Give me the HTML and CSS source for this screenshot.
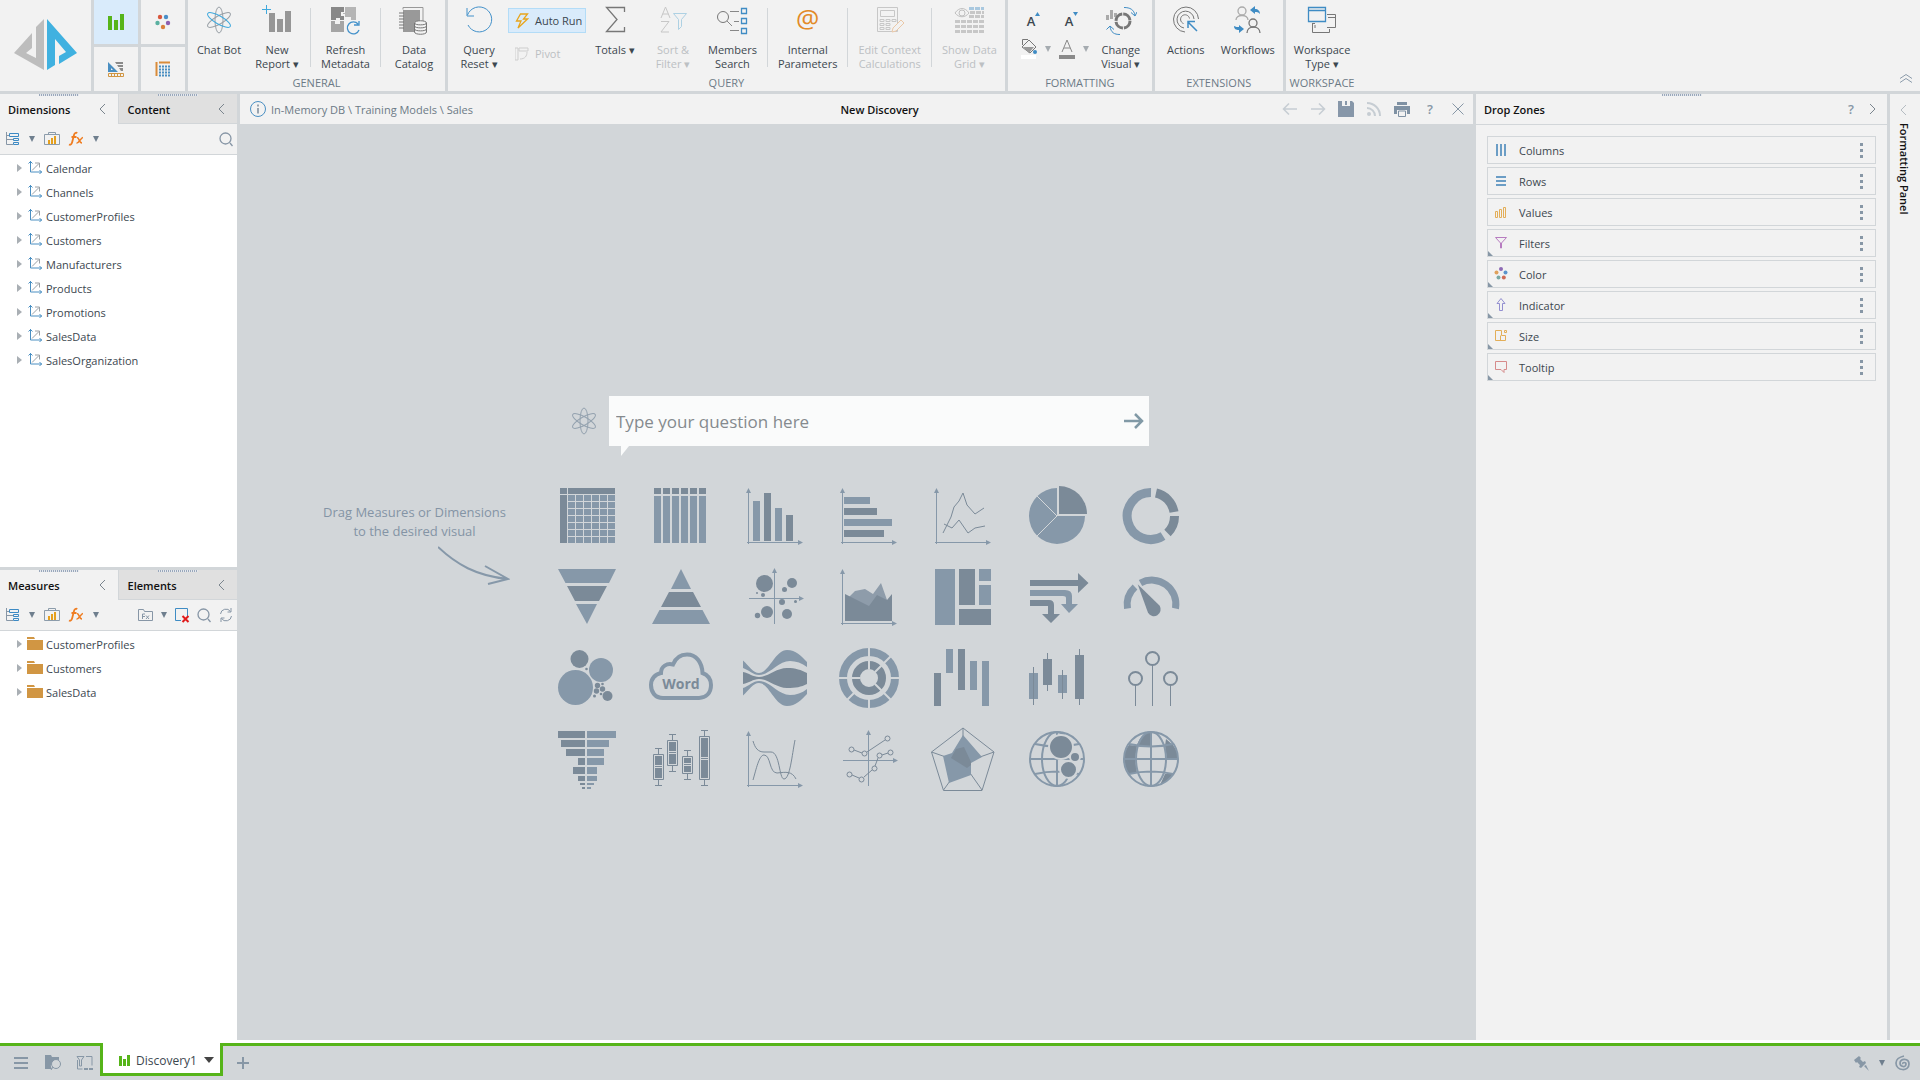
FILE: index.html
```html
<!doctype html>
<html lang="en">
  <head>
    <meta charset="UTF-8" />
    <meta name="viewport" content="width=device-width, initial-scale=1.0" />
    <title>New Discovery</title>
    <link rel="stylesheet" href="styles.css">
  </head>
  <body>
    <!-- shared icons -->
    <svg class="sprite" aria-hidden="true">
      <symbol id="atom" viewBox="0 0 32 32">
        <ellipse cx="16" cy="16" rx="4" ry="13" />
        <ellipse cx="16" cy="16" rx="4" ry="13" transform="rotate(60 16 16)" />
        <ellipse class="hot" cx="16" cy="16" rx="4" ry="13" transform="rotate(-60 16 16)" />
      </symbol>
      <symbol id="caret" viewBox="0 0 8 8"><path d="M1 1h6L4 7z" /></symbol>
      <symbol id="back" viewBox="0 0 12 12"><path d="M8 1L3 6l5 5" fill="none" stroke="currentColor" /></symbol>
      <symbol id="dimension" viewBox="0 0 16 16">
        <path d="M3.5 1v11H15M1.5 3.5l2-2 2 2M12.5 10l2 2-2 2" fill="none" stroke="#4a8fc2" />
        <path d="M5 10.5l7-7M8 3h4.5v4.5" fill="none" stroke="#9aa0a5" />
      </symbol>
      <symbol id="folder" viewBox="0 0 16 16"><path d="M0 1h7l1 2H0zM0 4h16v10H0z" fill="#d19643" /></symbol>
      <symbol id="hierarchy" viewBox="0 0 16 16">
        <path d="M2.5 1v12.5H9M2.5 4.5H5M2.5 8.5H9" fill="none" stroke="#8796a6" />
        <path d="M5.5 2.5h9v3h-9zM9.5 7.5h5v2h-5zM9.5 11.5h5v2h-5z" fill="none" stroke="#3d8ac4" />
      </symbol>
      <symbol id="chartcase" viewBox="0 0 16 16">
        <path d="M.5 3.5h15v10H.5zM4.5 3V1.5h7V3" fill="none" stroke="#8c9cab" />
        <path d="M4 9h2v4H4zM7 7h2v6H7zM10 5h2v8h-2z" fill="#e5a01e" />
      </symbol>
      <symbol id="fx" viewBox="0 0 16 16">
        <path d="M1 13.5c2 1 3-1 3.6-4L6 4C6.5 2 8 1.3 9.3 2M3.5 6h5" fill="none" stroke="#ef7d22" stroke-width="1.8" />
        <path d="M9 7c2-1 2 5 5 5M15 6.5c-2 0-4 6-6.5 5.5" fill="none" stroke="#ef7d22" stroke-width="1.5" />
      </symbol>
      <symbol id="search" viewBox="0 0 16 16"><path d="M12 12l2.5 3M13 7.5a5.5 5.5 0 1 1-11 0 5.5 5.5 0 0 1 11 0z" fill="none" stroke="#8796a6" stroke-width="1.3" /></symbol>
      <symbol id="axes" viewBox="0 0 64 64">
        <path d="M5.5 8v52M4 58.5h52" fill="none" stroke="#8698a9" />
        <path d="M3 9l2.5-5L8 9zM55 56l5 2.5-5 2.5z" fill="#8698a9" />
      </symbol>
      <symbol id="cross" viewBox="0 0 64 64">
        <path d="M31.5 8v51M6 33.5h51" fill="none" stroke="#8698a9" />
        <path d="M29 8l2.5-5L34 8zM56 31l5 2.5-5 2.5z" fill="#8698a9" />
      </symbol>
    </svg>

    <header class="ribbon">
      <div class="logo">
        <svg width="64" height="52" viewBox="14 19 64 52" role="img" aria-label="Pyramid">
          <path d="M44 19v51L14 53l18-20v15l-6 5 10 5V27z" fill="#bdbdbd" />
          <path d="M47 19l30 34-18 11v-8l7-4-11-13v26l-8 5z" fill="#40b1e0" />
        </svg>
      </div>
      <nav class="apps">
        <button class="app active" aria-label="Discover">
          <svg width="16" height="16"><path d="M0 2h4v14H0zM6 6h4v10H6zM12 0h4v16h-4z" fill="#56b419" /></svg>
        </button>
        <button class="app" aria-label="Illustrate">
          <svg width="16" height="16"><circle cx="5" cy="3" r="2.2" fill="#d9573d" /><circle cx="11" cy="3" r="2.2" fill="#4a8fc9" /><circle cx="2.5" cy="9" r="2.2" fill="#5ab0a0" /><circle cx="13" cy="9" r="2.2" fill="#8e5fb0" /><circle cx="8" cy="13" r="2.2" fill="#da803a" /></svg>
        </button>
        <button class="app" aria-label="Formulate">
          <svg width="16" height="16"><path d="M0 1l10 10H0zM3 7v2h2z" fill="#4a8fc2" fill-rule="evenodd" /><path d="M7 1h8v9h-2z" fill="#8a8a8a" /><path d="M7 3.5h8M8 6.5h7" stroke="#f2f2f2" /><path d="M.5 12.5h15v3H.5zM3.5 13v2m3-2v2m3-2v2m3-2v2" fill="none" stroke="#d19643" /></svg>
        </button>
        <button class="app" aria-label="Present">
          <svg width="16" height="16"><path d="M1.5 1v14M4 1.5h11" stroke="#d98c3a" stroke-width="2" /><path d="M4 5.5h11M4 8.5h11M4 11.5h11M4 14.5h11" stroke="#4a8fc2" stroke-width="2" stroke-dasharray="2 1" /></svg>
        </button>
      </nav>

      <section class="group">
        <div class="items">
          <button class="item">
            <svg class="icon atom blue" width="32" height="32"><use href="#atom" /></svg>
            <span>Chat Bot</span>
          </button>
          <button class="item">
            <svg class="icon" width="32" height="32"><path d="M8 9h6v19H8zM16 15h6v13h-6zM24 7h6v21h-6z" fill="#969696" /><path d="M5.5 1v9M1 5.5h9" stroke="#40a9dd" /></svg>
            <span>New<br>Report ▾</span>
          </button>
          <i class="divider"></i>
          <button class="item">
            <svg class="icon" width="32" height="32"><path d="M2 3h13v5h-3v4h3v4h-4v-2H7v2H2z" fill="#888" /><path d="M16 3h11v13h-5v-3h-6v-3h-2V9h2z" fill="#b5b5b5" /><path d="M2 17h4v3h5v-3h4v11H2z" fill="#a5a5a5" /><path d="M29 20a6 6 0 1 0 1 6M30 17v4h-5" fill="none" stroke="#4391ca" stroke-width="1.3" /></svg>
            <span>Refresh<br>Metadata</span>
          </button>
          <i class="divider"></i>
          <button class="item">
            <svg class="icon" width="32" height="32"><path d="M5 6h17v22H5z" fill="#999" /><path d="M5 5.5V3.5h20V18" fill="none" stroke="#999" /><path d="M1 9h5M1 12h5M1 15h5M1 18h5M1 21h5M1 24h5" stroke="#777" /><path d="M16 19c0-3 13-3 13 0v9c0 3-13 3-13 0z" fill="#f2f2f2" /><path d="M16.5 19c0-3 12-3 12 0v9c0 3-12 3-12 0zM16.5 19c0 2.5 12 2.5 12 0M16.5 22c0 2.5 12 2.5 12 0m-12 3c0 2.5 12 2.5 12 0" fill="none" stroke="#777" /></svg>
            <span>Data<br>Catalog</span>
          </button>
        </div>
        <h2>GENERAL</h2>
      </section>

      <section class="group">
        <div class="items">
          <button class="item">
            <svg class="icon" width="32" height="32"><path d="M4.5 11A12.5 12.5 0 1 1 5 21M4 4v8h7" fill="none" stroke="#4391ca" /></svg>
            <span>Query<br>Reset ▾</span>
          </button>
          <div class="stack">
            <button class="toggle on">
              <svg width="14" height="16"><path d="M5.5 1h7l-4 5h4L3 15l3-7H1.5z" fill="none" stroke="#e8a51c" stroke-width="1.3" /></svg>
              Auto Run
            </button>
            <button class="toggle" disabled>
              <svg width="14" height="16"><path d="M0 2h3v12H0zM4 2h9v3H4zM12 6c0 4-2 7-7 7" fill="none" stroke="#999" /></svg>
              Pivot
            </button>
          </div>
          <button class="item">
            <svg class="icon" width="32" height="32"><path d="M25.5 8V3.5h-18L18 15.5 7.5 27.5h18V23" fill="none" stroke="#777" stroke-width="1.3" /></svg>
            <span>Totals ▾</span>
          </button>
          <button class="item" disabled>
            <svg class="icon" width="32" height="32"><path d="M4 14L8.5 3 13 14M5.5 10h6M4 17.5h8L4 28h8" fill="none" stroke="#888" /><path d="M16.5 9.5h13l-5 6v7l-3 3v-10z" fill="none" stroke="#4aa0cf" /></svg>
            <span>Sort &amp;<br>Filter ▾</span>
          </button>
          <button class="item">
            <svg class="icon" width="32" height="32"><circle cx="7" cy="13" r="5.5" fill="none" stroke="#777" /><path d="M11 17l5 5M14 7.5h9M18 17.5h5M14 26.5h9" stroke="#888" /><path d="M25.5 4.5h5v5h-5zM25.5 14.5h5v5h-5zM25.5 24.5h5v5h-5z" fill="none" stroke="#3f8cc4" stroke-width="1.3" /></svg>
            <span>Members<br>Search</span>
          </button>
          <i class="divider"></i>
          <button class="item">
            <span class="icon at">@</span>
            <span>Internal<br>Parameters</span>
          </button>
          <i class="divider"></i>
          <button class="item" disabled>
            <svg class="icon" width="32" height="32"><path d="M3.5 3.5h20v24h-20zM6.5 6.5h14v6h-14zM6 15.5h4v2H6zm6 0h4v2h-4zm6 0h4v2h-4zM6 19.5h4v2H6zm6 0h4v2h-4zM6 23.5h4v2H6zm6 0h4v2h-4z" fill="none" stroke="#888" /><path d="M18 28l1-4 8-8 3 3-8 8z" fill="#f2f2f2" stroke="#e08a3a" /></svg>
            <span>Edit Context<br>Calculations</span>
          </button>
          <i class="divider"></i>
          <button class="item" disabled>
            <svg class="icon" width="32" height="32"><path d="M2 17.5h29M2 22.5h29M2 27.5h29" stroke="#888" stroke-width="3" stroke-dasharray="5 1" /><path d="M16 12.5h15M17 8.5h14" stroke="#888" stroke-width="3" stroke-dasharray="5 1" /><path d="M16 4.5h15" stroke="#3f8cc4" stroke-width="3" stroke-dasharray="5 1" /><path d="M2 9c4-6 10-6 14 0-4 5-10 5-14 0z" fill="none" stroke="#777" /><circle cx="9" cy="9" r="3" fill="none" stroke="#777" /></svg>
            <span>Show Data<br>Grid ▾</span>
          </button>
        </div>
        <h2>QUERY</h2>
      </section>

      <section class="group">
        <div class="items">
          <div class="fonts">
            <button class="letter" aria-label="Increase font">A<svg width="5" height="4"><path d="M0 4l2.5-4L5 4z" fill="#3f8cc4" /></svg></button>
            <button class="letter" aria-label="Decrease font">A<svg width="5" height="4"><path d="M0 0l2.5 4L5 0z" fill="#3f8cc4" /></svg></button>
            <button class="swatch" aria-label="Fill color">
              <svg width="18" height="20"><path d="M2 8l7-7 7 7-6 6z" fill="none" stroke="#777" /><path d="M3 8h11l-5 6z" fill="#999" /><path d="M2.5 6V.5H8" fill="none" stroke="#777" /><circle cx="15" cy="13" r="2" fill="#3f8cc4" /><path d="M1 16h15v4H1z" fill="#fff" /></svg>
              <svg class="caret" width="8" height="8"><use href="#caret" /></svg>
            </button>
            <button class="swatch" aria-label="Font color">
              <svg width="18" height="20"><path d="M4 13l5-12 5 12M6 9h6" fill="none" stroke="#888" /><path d="M1 16h16v4H1z" fill="#8a8a8a" /></svg>
              <svg class="caret" width="8" height="8"><use href="#caret" /></svg>
            </button>
          </div>
          <button class="item">
            <svg class="icon" width="32" height="32"><path d="M1 11h3v5H1zM5 6h3v9H5zM9 9h3v4H9z" fill="#aaa" /><circle cx="18" cy="17" r="7" fill="none" stroke="#777" stroke-width="3" stroke-dasharray="10 1" /><path d="M19 3.5c6 0 10 2 11 8M26 8.5l4 3.5 2-4M15 30.5c-6 0-9-2-10-8M1.5 25.5L5 22l4 3.5" fill="none" stroke="#3f8cc4" /></svg>
            <span>Change<br>Visual ▾</span>
          </button>
        </div>
        <h2>FORMATTING</h2>
      </section>

      <section class="group">
        <div class="items">
          <button class="item">
            <svg class="icon" width="32" height="32"><path d="M15 28A12.5 12.5 0 1 1 28.5 15M14 24a8.5 8.5 0 1 1 10-9M13.5 19.5a4.5 4.5 0 1 1 6-5" fill="none" stroke="#777" /><path d="M27 27l-9-9M18 24v-6.5h7" fill="none" stroke="#3f8cc4" stroke-width="1.5" /></svg>
            <span>Actions</span>
          </button>
          <button class="item">
            <svg class="icon" width="32" height="32"><circle cx="10" cy="7" r="4" fill="none" stroke="#aaa" stroke-width="1.3" /><path d="M4 16c0-6 12-6 12 0" fill="none" stroke="#aaa" stroke-width="1.3" /><circle cx="21" cy="19" r="4" fill="none" stroke="#777" stroke-width="1.3" /><path d="M15 29c0-8 13-8 13 0" fill="none" stroke="#777" stroke-width="1.3" /><path d="M18 6l5-4v3c3 0 5 2 5 5-2-2-3-2-5-2v2zM12 25l-5 4v-3c-3 0-5-1-5-4 2 1 3 1 5 1v-2z" fill="#3f8cc4" /></svg>
            <span>Workflows</span>
          </button>
        </div>
        <h2>EXTENSIONS</h2>
      </section>

      <section class="group">
        <div class="items">
          <button class="item">
            <svg class="icon" width="32" height="32"><path d="M21 10.5h8.5v13H21M22 13.5h7M6.5 20v8.5h17V25M6 19.5h3M9 24v-3" fill="none" stroke="#777" /><path d="M2.5 3.5h17v14h-17zM3 6.5h16" fill="#f2f2f2" stroke="#3f8cc4" stroke-width="1.3" /></svg>
            <span>Workspace<br>Type ▾</span>
          </button>
        </div>
        <h2>WORKSPACE</h2>
      </section>
      <button class="collapse" aria-label="Collapse ribbon">
        <svg width="14" height="10"><path d="M1 5.5l6-4 6 4M1 9.5l6-4 6 4" fill="none" stroke="#8c9cab" /></svg>
      </button>
    </header>

    <main class="workspace">
      <aside class="side">
        <section class="panel">
          <div class="tabs">
            <button class="tab grip active">Dimensions<svg width="12" height="12"><use href="#back" /></svg></button>
            <button class="tab grip">Content<svg width="12" height="12"><use href="#back" /></svg></button>
          </div>
          <div class="tools">
            <div class="tools-left">
              <button aria-label="Hierarchies"><svg width="16" height="16"><use href="#hierarchy" /></svg></button>
              <button aria-label="Hierarchy options"><svg class="caret" width="8" height="8"><use href="#caret" /></svg></button>
              <button aria-label="Sets"><svg width="16" height="16"><use href="#chartcase" /></svg></button>
              <button aria-label="Formula"><svg width="16" height="16"><use href="#fx" /></svg></button>
              <button aria-label="Formula options"><svg class="caret" width="8" height="8"><use href="#caret" /></svg></button>
            </div>
            <div class="tools-right">
              <button aria-label="Search"><svg width="16" height="16"><use href="#search" /></svg></button>
            </div>
          </div>
          <ul class="tree">
            <li><svg width="16" height="16"><use href="#dimension" /></svg>Calendar</li>
            <li><svg width="16" height="16"><use href="#dimension" /></svg>Channels</li>
            <li><svg width="16" height="16"><use href="#dimension" /></svg>CustomerProfiles</li>
            <li><svg width="16" height="16"><use href="#dimension" /></svg>Customers</li>
            <li><svg width="16" height="16"><use href="#dimension" /></svg>Manufacturers</li>
            <li><svg width="16" height="16"><use href="#dimension" /></svg>Products</li>
            <li><svg width="16" height="16"><use href="#dimension" /></svg>Promotions</li>
            <li><svg width="16" height="16"><use href="#dimension" /></svg>SalesData</li>
            <li><svg width="16" height="16"><use href="#dimension" /></svg>SalesOrganization</li>
          </ul>
        </section>
        <section class="panel">
          <div class="tabs">
            <button class="tab grip active">Measures<svg width="12" height="12"><use href="#back" /></svg></button>
            <button class="tab grip">Elements<svg width="12" height="12"><use href="#back" /></svg></button>
          </div>
          <div class="tools">
            <div class="tools-left">
              <button aria-label="Hierarchies"><svg width="16" height="16"><use href="#hierarchy" /></svg></button>
              <button aria-label="Hierarchy options"><svg class="caret" width="8" height="8"><use href="#caret" /></svg></button>
              <button aria-label="Sets"><svg width="16" height="16"><use href="#chartcase" /></svg></button>
              <button aria-label="Formula"><svg width="16" height="16"><use href="#fx" /></svg></button>
              <button aria-label="Formula options"><svg class="caret" width="8" height="8"><use href="#caret" /></svg></button>
            </div>
            <div class="tools-right">
              <button aria-label="Formula folder"><svg width="16" height="16"><path d="M.5 2.5h5l1 2h8v9H.5zM4.5 12V7H7M4.5 9.5H7M8 8.5l3 3.5M11 8.5L8 12" fill="none" stroke="#8796a6" /></svg></button>
              <button aria-label="Folder options"><svg class="caret" width="8" height="8"><use href="#caret" /></svg></button>
              <button aria-label="Clear selection"><svg width="16" height="16"><path d="M7 13.5H1.5v-12h12V9" fill="none" stroke="#3f8cc4" /><path d="M8.5 9l6 6M14.5 9l-6 6" stroke="#e01b1b" stroke-width="2" /></svg></button>
              <button aria-label="Search"><svg width="16" height="16"><use href="#search" /></svg></button>
              <button aria-label="Refresh"><svg width="16" height="16"><path d="M2.5 7a5.5 5.5 0 0 1 10-2.5M13.5 9a5.5 5.5 0 0 1-10 2.5M13 1v4H9.5M3 15v-4h3.5" fill="none" stroke="#8796a6" /></svg></button>
            </div>
          </div>
          <ul class="tree">
            <li><svg width="16" height="16"><use href="#folder" /></svg>CustomerProfiles</li>
            <li><svg width="16" height="16"><use href="#folder" /></svg>Customers</li>
            <li><svg width="16" height="16"><use href="#folder" /></svg>SalesData</li>
          </ul>
        </section>
      </aside>

      <section class="center">
        <div class="titlebar">
          <div class="crumbs">
            <svg width="16" height="16"><circle cx="8" cy="8" r="7.5" fill="none" stroke="#4a8fc2" /><path d="M8 3.5v2M8 7v5.5" stroke="#7a8b9b" stroke-width="1.5" /></svg>
            In-Memory DB \ Training Models \ Sales
          </div>
          <h1>New Discovery</h1>
          <div class="actions">
            <button aria-label="Undo" disabled><svg width="16" height="16"><path d="M15 8H1.5M7 2.5L1.5 8 7 13.5" fill="none" stroke="#8797a6" stroke-width="1.5" /></svg></button>
            <button aria-label="Redo" disabled><svg width="16" height="16"><path d="M1 8h13.5M9 2.5L14.5 8 9 13.5" fill="none" stroke="#8797a6" stroke-width="1.5" /></svg></button>
            <button aria-label="Save"><svg width="16" height="16"><path d="M0 0h4v5h8V0h2l2 2v14H0zM7 0h2v4H7z" fill="#8797a9" /></svg></button>
            <button aria-label="Subscribe" disabled><svg width="16" height="16"><circle cx="3" cy="13" r="2" fill="#8797a6" /><path d="M1 7a8 8 0 0 1 8 8M1 2a13 13 0 0 1 13 13" fill="none" stroke="#8797a6" stroke-width="2" /></svg></button>
            <button aria-label="Print"><svg width="16" height="16"><path d="M3 1h10v3H3zM0 5h16v8h-3V9H3v4H0z" fill="#7f91a3" /><path d="M4.5 10h7v5.5h-7z" fill="none" stroke="#7f91a3" /></svg></button>
            <button class="help">?</button>
            <button aria-label="Close"><svg width="16" height="16"><path d="M2.5 2.5l11 11M13.5 2.5l-11 11" stroke="#8797a6" /></svg></button>
          </div>
        </div>

        <div class="canvas">
          <div class="hint">
            <p>Drag Measures or Dimensions<br>to the desired visual</p>
            <svg width="72" height="40" fill="none" stroke="#8698a9" stroke-width="2"><path d="M0 1c18 17 38 29 70 32M47 20l23 13-20 5" /></svg>
          </div>
          <div class="start">
            <form class="ask">
              <svg class="atom" width="32" height="32"><use href="#atom" /></svg>
              <div class="bubble">
                <input type="text" placeholder="Type your question here" aria-label="Type your question here">
                <button type="button" aria-label="Ask"><svg width="20" height="18"><path d="M0 9h17M11 2l7 7-7 7" fill="none" stroke="#8199a6" stroke-width="2.5" /></svg></button>
              </div>
            </form>

            <div class="visuals">
              <button aria-label="Matrix"><svg class="visual" viewBox="0 0 64 64"><path class="dk" d="M5 4h7v6H5zM13 4h47v6H13zM5 11h7v48H5z" /><path d="M13 14h47M13 21h47M13 28h47M13 35h47M13 42h47M13 49h47M13 56h47" stroke="#8698a9" stroke-width="6" stroke-dasharray="7 1" /></svg></button>
              <button aria-label="Table"><svg class="visual" viewBox="0 0 64 64"><path d="M5 7h52" stroke="#7b8a98" stroke-width="6" stroke-dasharray="7 2" /><path d="M5 35.5h52" stroke="#8698a9" stroke-width="47" stroke-dasharray="7 2" /></svg></button>
              <button aria-label="Column chart"><svg class="visual" viewBox="0 0 64 64"><use href="#axes" /><path d="M10 17h7v40h-7zM32 24h7v33h-7z" /><path class="dk" d="M21 9h7v48h-7zM43 31h7v26h-7z" /></svg></button>
              <button aria-label="Bar chart"><svg class="visual" viewBox="0 0 64 64"><use href="#axes" /><path d="M7 13h26v7H7zM7 35h48v7H7z" /><path class="dk" d="M7 24h33v7H7zM7 46h40v7H7z" /></svg></button>
              <button aria-label="Line chart"><svg class="visual" viewBox="0 0 64 64"><use href="#axes" /><path class="ln" d="M12 49l8-16 3-10 5-6 4-8 4 12 8 9 9-6M13 40l8 4 7-8 9 13 7-5 10-2" /></svg></button>
              <button aria-label="Pie chart"><svg class="visual" viewBox="0 0 64 64"><path d="M32 32h28A28 28 0 1 1 32 4z" /><path d="M32 32L12 12M32 32L12 52" class="gap" /><path class="dk" d="M34 30V2a28 28 0 0 1 28 28z" /></svg></button>
              <button aria-label="Donut chart"><svg class="visual" viewBox="0 0 64 64"><g fill="none" stroke-width="9"><path d="M44 52A23.5 23.5 0 1 1 32 8.5" stroke="#8698a9" /><path d="M37 9a23.5 23.5 0 0 1 18 19M55.5 32a23.5 23.5 0 0 1-7 17" stroke="#7b8a98" /></g></svg></button>

              <button aria-label="Funnel"><svg class="visual" viewBox="0 0 64 64"><path d="M3 4h58l-7 14H10.5zM21 39h21L32 59z" /><path class="dk" d="M12 21h40l-8 15H20z" /></svg></button>
              <button aria-label="Pyramid"><svg class="visual" viewBox="0 0 64 64"><path d="M32 4l10 20H22zM10.5 45h43L61 59H3z" /><path class="dk" d="M20 27h24l8 15H12z" /></svg></button>
              <button aria-label="Scatter chart"><svg class="visual" viewBox="0 0 64 64"><use href="#cross" /><g class="dk"><circle cx="21.5" cy="18.5" r="8.5" /><circle cx="49" cy="18" r="5" /><circle cx="41.5" cy="24.5" r="2.5" /><circle cx="14" cy="28" r="1" /><circle cx="20" cy="30" r="2" /><circle cx="39" cy="37" r="3" /><circle cx="52.5" cy="36.5" r="1.5" /><circle cx="24" cy="47" r="6" /><circle cx="14.5" cy="50.5" r="2.7" /><circle cx="44" cy="49" r="5" /></g></svg></button>
              <button aria-label="Area chart"><svg class="visual" viewBox="0 0 64 64"><use href="#axes" /><path d="M12 32l6-6 10-2 8 5 8-11 6 17-20 14z" fill="#8e9caa" /><path class="dk" d="M8 29l24 12 8-11 10 5 5-6v27H8z" /></svg></button>
              <button aria-label="Treemap"><svg class="visual" viewBox="0 0 64 64"><path d="M4 4h20v56H4zM48 4h12v12H48zM48 20h12v20H48z" /><path class="dk" d="M28 4h16v36H28zM28 44h32v16H28z" /></svg></button>
              <button aria-label="Flow chart"><svg class="visual" viewBox="0 0 64 64"><path class="dk" d="M5 15h48V8l10.5 10L53 28v-7H5zM5 35h19q5 0 5 5v9h6l-9 9-9-9h6v-8H5z" /><path d="M5 25h35q7 0 7 6v8h6l-9 9-8-9h5v-6q0-2-3-2H5z" /></svg></button>
              <button aria-label="Gauge"><svg class="visual" viewBox="0 0 64 64"><g fill="none" stroke="#8698a9" stroke-width="7"><path d="M21.5 18A24 24 0 0 1 56.5 43.5M8.5 43.5A24 24 0 0 1 16 22" /></g><path class="dk" d="M18.7 19.3l22 21.5a6.5 6.5 0 1 1-11.7 7z" /></svg></button>

              <button aria-label="Packed bubbles"><svg class="visual" viewBox="0 0 64 64"><circle cx="46" cy="24" r="12" /><circle cx="20.5" cy="41.5" r="17.5" /><g class="dk"><circle cx="24.5" cy="13" r="9" /><circle cx="52.5" cy="50" r="5" /><circle cx="31.5" cy="23" r="1.3" /><circle cx="42.5" cy="39.5" r="2.7" /><circle cx="47.5" cy="38" r="1.3" /><circle cx="47.5" cy="43" r="2.7" /><circle cx="41.5" cy="45" r="2.7" /><circle cx="39.5" cy="50" r="1.5" /><circle cx="46" cy="48" r="1.3" /></g></svg></button>
              <button aria-label="Word cloud"><svg class="visual" viewBox="0 0 64 64"><path d="M14 52C6 52 2 46 2 39c0-6 4-11 10-12 0-7 6-10 12-8.5C27 11 33 8.5 38 8.5 47 8.5 53 16 53.5 27 59 29 62 33 62 39c0 8-5 13-12 13z" fill="none" stroke="#8698a9" stroke-width="4" /><text class="word" x="32" y="43" text-anchor="middle">Word</text></svg></button>
              <button aria-label="Stream chart"><svg class="visual" viewBox="0 0 64 64"><path d="M0 14.5C6 20 10 27 16 27 26 27 32 4 44 4c9 0 14 6 20 12v5c-5-4-11-6-17-6-12 0-20 14-31 14C10 29 6 24 0 22zM0 49.5C6 44 10 37 16 37c10 0 16 23 28 23 9 0 14-6 20-12v-5c-5 4-11 6-17 6-12 0-20-14-31-14C10 35 6 40 0 42z" /><path class="dk" d="M0 26c6 1 10 5 16 5 9 0 17-9 28-9 9 0 14 2 20 5v11c-6 3-11 4-20 4-11 0-19-9-28-9-6 0-10 4-16 5z" /></svg></button>
              <button aria-label="Sunburst"><svg class="visual" viewBox="0 0 64 64"><g fill="none"><circle cx="32" cy="32" r="26" stroke="#8698a9" stroke-width="8" /><circle cx="32" cy="32" r="13" stroke="#7b8a98" stroke-width="8" /></g><path class="gap2" d="M32 1v22M1 32h22M43 32m10 0h10M32 53v10M38 26l17-17M38 38l17 17M18 46l-9 9" /></svg></button>
              <button aria-label="Waterfall"><svg class="visual" viewBox="0 0 64 64"><path class="dk" d="M3 27h7v33H3zM27 3h7v41h-7z" /><path d="M15 3h7v24h-7zM39 15h7v29h-7zM51 15h7v45h-7z" /></svg></button>
              <button aria-label="Candlestick"><svg class="visual" viewBox="0 0 64 64"><path d="M4 27h9v26H4zM33 29h9v18h-9z" /><path class="dk" d="M18 13h9v26h-9zM50 9h9v44h-9z" /><path class="ln" d="M8.5 21v38M22.5 7v38M37.5 24v29M54.5 3v56" /></svg></button>
              <button aria-label="Lollipop"><svg class="visual" viewBox="0 0 64 64"><g fill="none" stroke="#7b8a98" stroke-width="2"><circle cx="16.5" cy="32.5" r="6.5" /><circle cx="33.5" cy="12.5" r="6.5" /><circle cx="51.5" cy="32.5" r="6.5" /></g><path class="ln" d="M16.5 39v21M33.5 19v41M51.5 39v21" /></svg></button>

              <button aria-label="Tornado"><svg class="visual" viewBox="0 0 64 64"><path class="dk" d="M3 4h27v7H3zM6 13h24v7H6zM11 22h19v7H11zM23 31h7v7h-7zM18 40h12v7H18zM23 49h7v5h-7zM25 56h5v2h-5zM27 60h3v2h-3z" /><path d="M32 4h29v7H32zM32 13h22v7H32zM32 22h17v7H32zM32 31h17v7H32zM32 40h10v7H32zM32 49h10v5H32zM32 56h7v2h-7zM32 60h4v2h-4z" /></svg></button>
              <button aria-label="Box plot"><svg class="visual" viewBox="0 0 64 64"><path class="ln" d="M4.5 27.5h10v25h-10zM18.5 13.5h10v25h-10zM33.5 29.5h10v17h-10zM50.5 9.5h10v43h-10zM9.5 21v6M6 21.5h7M9.5 53v5M6 58.5h7M23.5 7v6M20 7.5h7M23.5 39v5M20 44.5h7M38.5 23v6M35 23.5h7M38.5 47v5M35 52.5h7M55.5 3v6M52 3.5h7M55.5 53v5M52 58.5h7" /><path class="dk" d="M6 29h7v9H6zM6 41h7v10H6zM20 15h7v9h-7zM20 27h7v10h-7zM35 31h7v5h-7zM35 39h7v6h-7zM52 11h7v19h-7zM52 33h7v18h-7z" /><path class="ln" d="M6 39.5h7M20 25.5h7M35 37.5h7M52 31.5h7" /></svg></button>
              <button aria-label="Spline chart"><svg class="visual" viewBox="0 0 64 64"><use href="#axes" /><path class="ln" d="M10 14c2 7 5 11 11 11h7c9 0 8 27 13 27 6 0 8-24 11-39M10 53c3-10 6-25 11-25 7 0 5 18 13 18 9-1 15-2 19 6" /></svg></button>
              <button aria-label="Scatter line"><svg class="visual" viewBox="0 0 64 64"><use href="#cross" /><g class="ln"><path d="M17 23l8 3M30 25l18-12M15 48l7 3M27 50l8-7M38 39l3-8M45 28l6-2" /><circle cx="14.5" cy="22.5" r="2.5" /><circle cx="27.5" cy="26.5" r="2.5" /><circle cx="50.5" cy="11.5" r="2.5" /><circle cx="12.5" cy="47.5" r="2.5" /><circle cx="24.5" cy="52.5" r="2.5" /><circle cx="37.5" cy="41.5" r="2.5" /><circle cx="42.5" cy="28.5" r="2.5" /><circle cx="53.5" cy="25.5" r="2.5" /></g></svg></button>
              <button aria-label="Radar"><svg class="visual" viewBox="0 0 64 64"><path class="ln" d="M32 1l31 24-12 38.5H12.5L.5 25zM32 1v35L63 25M32 36l19 27M32 36L12.5 63M32 36L.5 25" /><path d="M32 8l19 22-11 6v12l-22 8-6-27 9-3z" /><path class="dk" d="M20 31l5-9 8-2 7 15v3l-4 3z" /></svg></button>
              <button aria-label="Map bubbles"><svg class="visual" viewBox="0 0 64 64"><g class="globe"><circle cx="32" cy="32" r="27" /><ellipse cx="32" cy="32" rx="15" ry="27" /><path d="M32 5v54M5 32h54M10 17q22 5 44 0M10 47q22-5 44 0" /></g><g class="pin"><circle cx="36" cy="20" r="12" /><circle cx="50" cy="30" r="5" /><circle cx="43.5" cy="42.5" r="8.5" /></g></svg></button>
              <button aria-label="Map shapes"><svg class="visual" viewBox="0 0 64 64"><path class="dk" d="M32 5v15l-14-2c3-8 7-12 14-13zM10 18l8 1-2 13H5q0-8 5-14zM5 32h11l2 14-8 1q-5-7-5-15zM47 12l7 6q5 7 5 14H48l-2-13zM46 47l8 0q-5 7-13 11z" /><g class="globe"><circle cx="32" cy="32" r="27" /><ellipse cx="32" cy="32" rx="15" ry="27" /><path d="M32 5v54M5 32h54M10 17q22 5 44 0M10 47q22-5 44 0" /></g></svg></button>
            </div>
          </div>
        </div>
      </section>

      <aside class="zones">
        <div class="zones-head grip">
          <h2>Drop Zones</h2>
          <button class="help">?</button>
          <button aria-label="Collapse"><svg width="12" height="12"><path d="M4 1l5 5-5 5" fill="none" stroke="currentColor" /></svg></button>
        </div>
        <ul class="zone-list">
          <li><svg width="16" height="16"><path d="M4 2v12M8 2v12M12 2v12" stroke="#6b9dc5" stroke-width="2" /></svg>Columns<button class="more" aria-label="Columns options"></button></li>
          <li><svg width="16" height="16"><path d="M3 4h10M3 8h10M3 12h10" stroke="#6b9dc5" stroke-width="2" /></svg>Rows<button class="more" aria-label="Rows options"></button></li>
          <li><svg width="16" height="16"><path d="M2.5 7.5h2v6h-2zM6.5 5.5h2v8h-2zM10.5 3.5h2v10h-2z" fill="none" stroke="#e3ae58" /></svg>Values<button class="more" aria-label="Values options"></button></li>
          <li class="fold"><svg width="16" height="16"><path d="M2.5 2.5h11L8.5 8v5h-1V8z" fill="none" stroke="#b77cc0" /></svg>Filters<button class="more" aria-label="Filters options"></button></li>
          <li class="fold"><svg width="16" height="16"><circle cx="8" cy="3" r="2" fill="#8e6bb5" /><circle cx="12.5" cy="6.5" r="2" fill="#5b94cc" /><circle cx="10.8" cy="11.5" r="2" fill="#cf6a55" /><circle cx="5.5" cy="11.5" r="2" fill="#7aa9a5" /><circle cx="3.5" cy="6.5" r="2" fill="#dfa15c" /></svg>Color<button class="more" aria-label="Color options"></button></li>
          <li class="fold"><svg width="16" height="16"><path d="M8 1.5l4 5H9.5v7h-3v-7H4z" fill="none" stroke="#938fd0" /></svg>Indicator<button class="more" aria-label="Indicator options"></button></li>
          <li class="fold"><svg width="16" height="16"><path d="M8.5 2.5h-6v10h10v-5h-4zM7.5 7.5v5M11.5 2.5h2v2h-2z" fill="none" stroke="#e3ae58" /></svg>Size<button class="more" aria-label="Size options"></button></li>
          <li class="fold"><svg width="16" height="16"><path d="M2.5 2.5h11v8H11v3l-3-3H2.5z" fill="none" stroke="#d68b8b" /></svg>Tooltip<button class="more" aria-label="Tooltip options"></button></li>
        </ul>
      </aside>

      <aside class="formatting">
        <svg width="12" height="12"><use href="#back" /></svg>
        <span>Formatting Panel</span>
      </aside>
    </main>

    <footer class="status">
      <div class="status-tools">
        <button aria-label="Menu"><svg width="20" height="16"><path d="M3 3h14M3 8h14M3 13h14" stroke="#8797a6" stroke-width="2" /></svg></button>
        <button aria-label="Find content"><svg width="20" height="16"><path d="M2 0h6l1 2h7v3a6 6 0 0 0-7 9H2z" fill="#8797a6" /><circle cx="13" cy="9" r="4.5" fill="none" stroke="#8797a6" /><path d="M10 12l-2 3" stroke="#8797a6" /></svg></button>
        <button aria-label="Slicers"><svg width="20" height="16"><path d="M2 1.5h7L6.5 5v6h-2V5zM11 1.5h6v9M2.5 5v9h5" fill="none" stroke="#8797a6" /><path d="M9 14h9" stroke="#8797a6" stroke-width="2" stroke-dasharray="4 1" /></svg></button>
      </div>
      <button class="sheet">
        <svg width="11" height="11"><path d="M0 1h3v10H0zM4 4h3v7H4zM8 0h3v11H8z" fill="#56b419" /></svg>
        Discovery1
        <svg width="12" height="8"><path d="M1 1h10L6 7z" fill="#444" /></svg>
      </button>
      <button class="add" aria-label="Add sheet"><svg width="12" height="12"><path d="M6 0v12M0 6h12" stroke="#8797a6" stroke-width="2" /></svg></button>
      <span class="fill"></span>
      <button aria-label="Pin"><svg width="16" height="16"><path d="M1 5l5-4 2 2-1 1 3 3 2-1 1 2-5 5-2-1 1-2-3-3-1 1zM11 11l5 5-3-6z" fill="#8797a6" /></svg></button>
      <button aria-label="Pin options"><svg class="caret" width="8" height="8"><use href="#caret" /></svg></button>
      <button aria-label="Activity"><svg width="16" height="16"><path d="M8 9c-1-2 3-2 3 0 0 4-6 3-6-1 0-5 9-5 9 1 0 8-13 7-13-1C1 5 4 2 9 1" fill="none" stroke="#8797a6" stroke-width="1.7" /></svg></button>
    </footer>
  </body>
</html>
```

FILE: styles.css
```css
* {
  box-sizing: border-box;
}

body {
  font-family: "Open Sans", "Noto Sans", sans-serif;
  font-size: 11px;
  display: flex;
  flex-direction: column;
  height: 100vh;
  margin: 0;
  color: #3c474f;
  background-color: #fff;
}

h1,
h2,
p,
ul {
  margin: 0;
  padding: 0;
}

h1,
h2 {
  font-size: 11px;
  font-weight: 600;
}

li {
  list-style: none;
}

svg {
  display: block;
  flex: none;
}

button {
  font: inherit;
  color: inherit;
  padding: 0;
  border: none;
  background: none;
  cursor: pointer;
}

.sprite {
  position: absolute;
  width: 0;
  height: 0;
}

.fill {
  flex: 1;
}

.caret {
  fill: #6f7f8e;
}

.atom {
  fill: none;
  stroke: #9aa1a7;
}

.atom.blue {
  --hot: #40a9dd;
}

.hot {
  stroke: var(--hot);
}

/* dotted drag handle at the top of a panel */
.grip {
  position: relative;
}

.grip::before {
  content: "";
  position: absolute;
  top: 0;
  left: 50%;
  width: 40px;
  height: 2px;
  margin-left: -20px;
  background: repeating-linear-gradient(90deg, #9aa8bb 0 1px, #e6e9ee 1px 2px);
}

/* ribbon */
.ribbon {
  display: flex;
  height: 94px;
  flex: none;
  background-color: #f2f2f2;
  border-bottom: 3px solid #d2d6d9;
}

.logo {
  width: 94px;
  padding: 19px 14px;
  border-right: 3px solid #d2d6d9;
}

.apps {
  display: grid;
  grid-template-columns: 44px 44px;
  gap: 3px;
  background-color: #d2d6d9;
}

.app {
  display: flex;
  align-items: center;
  justify-content: center;
  background-color: #f2f2f2;
}

.app.active {
  background-color: #d9ebfb;
}

.group {
  display: flex;
  flex-direction: column;
  justify-content: space-between;
  border-right: 3px solid #d2d6d9;
  padding: 0 2px;
}

.apps + .group {
  border-left: 3px solid #d2d6d9;
}

.group:last-of-type {
  border-right: none;
}

.group h2 {
  font-weight: normal;
  line-height: 16px;
  text-align: center;
  color: #6c7a86;
}

.items {
  display: flex;
}

.item {
  display: flex;
  flex-direction: column;
  align-items: center;
  min-width: 58px;
  padding: 4px 6px 0;
  line-height: 14px;
  white-space: nowrap;
}

.item .icon {
  margin-bottom: 7px;
}

.item:disabled,
.toggle:disabled {
  color: #bcc0c3;
}

.item:disabled svg,
.toggle:disabled svg,
.actions button:disabled {
  opacity: 0.4;
}

.at {
  width: 32px;
  height: 32px;
  font-size: 26px;
  line-height: 28px;
  color: #e28a27;
}

.divider {
  width: 1px;
  height: 59px;
  margin: 8px 4px 0;
  background-color: #d2d6d9;
}

.stack {
  display: flex;
  flex-direction: column;
  gap: 8px;
  padding-top: 8px;
}

.toggle {
  display: flex;
  align-items: center;
  gap: 6px;
  width: 78px;
  height: 25px;
  padding: 0 0 0 6px;
  border: 1px solid transparent;
  white-space: nowrap;
}

.toggle.on {
  background-color: #d9ebfb;
  border-color: #b3dcf7;
}

.fonts {
  display: grid;
  grid-template-columns: 38px 38px;
  grid-template-rows: 32px 26px;
  padding: 4px 0 0 6px;
}

.letter {
  display: flex;
  padding: 8px 0 0 11px;
  font-size: 13px;
  font-weight: 600;
  line-height: 18px;
}

.swatch {
  display: flex;
  align-items: center;
  gap: 6px;
  padding-left: 4px;
}

.swatch .caret {
  fill: #a5abb0;
}

.collapse {
  align-self: flex-end;
  margin: 0 7px 8px auto;
}

/* panels */
.workspace {
  display: flex;
  flex: 1;
  min-height: 0;
  background-color: #fff;
}

.side {
  display: flex;
  flex-direction: column;
  width: 237px;
  flex: none;
}

.panel {
  display: flex;
  flex-direction: column;
  flex: 1;
}

.panel + .panel {
  border-top: 3px solid #d2d6d9;
}

.tabs {
  display: flex;
  height: 30px;
  background-color: #f2f2f2;
}

.tab {
  display: flex;
  align-items: center;
  justify-content: space-between;
  flex: 1;
  padding: 0 9px 0 8px;
  font-weight: 600;
  color: #111;
}

.tab svg,
.zones-head svg {
  color: #7b858e;
}

.tab:not(.active) {
  padding: 1px 9px 0;
  background-color: #e0e0e0;
  border-left: 1px solid #d2d6d9;
  border-bottom: 1px solid #d2d6d9;
}

.tools {
  display: flex;
  align-items: center;
  justify-content: space-between;
  height: 31px;
  padding: 0 3px 0 4px;
  background-color: #f2f2f2;
  border-bottom: 1px solid #d2d6d9;
}

.tools-left,
.tools-right {
  display: flex;
  align-items: center;
  gap: 8px;
}

.tools-right {
  gap: 6px;
}

.tree {
  padding-top: 1px;
}

.tree li {
  display: flex;
  align-items: center;
  gap: 3px;
  height: 24px;
  padding-left: 17px;
}

.tree li::before {
  content: "";
  border: 4px solid transparent;
  border-left: 5px solid #a9afb4;
  border-right: none;
  margin-right: 2px;
}

.center {
  display: flex;
  flex-direction: column;
  flex: 1;
  min-width: 0;
  margin-bottom: 3px;
  background-color: #d2d6d9;
  border: solid #d2d6d9;
  border-width: 0 3px;
}

.titlebar {
  display: grid;
  grid-template-columns: 13fr auto 12fr;
  align-items: center;
  height: 30px;
  background-color: #f2f2f2;
}

.titlebar h1 {
  color: #111;
}

.crumbs {
  display: flex;
  align-items: center;
  gap: 5px;
  padding-left: 10px;
  color: #6c7a86;
}

.actions {
  display: flex;
  justify-content: flex-end;
  padding-right: 1px;
}

.actions button {
  display: flex;
  justify-content: center;
  width: 28px;
}

.help {
  font-size: 13px;
  font-weight: 600;
  line-height: 16px;
  color: #8797a6;
}

.canvas {
  display: flex;
  justify-content: center;
  padding: 272px 193px 0 0;
}

.hint {
  width: 218px;
  padding: 107px 33px 0 0;
  font-size: 13px;
  line-height: 19px;
  text-align: center;
  white-space: nowrap;
  color: #8494a5;
}

.hint svg {
  margin: 5px 0 0 116px;
}

.ask {
  display: flex;
  justify-content: flex-end;
  align-items: center;
  gap: 9px;
  padding-right: 49px;
}

.ask .atom {
  stroke: #94a2af;
}

.bubble {
  position: relative;
  display: flex;
  align-items: center;
  width: 540px;
  height: 50px;
  padding: 0 5px 0 7px;
  background-color: #fafbfb;
}

.bubble::after {
  content: "";
  position: absolute;
  top: 50px;
  left: 12px;
  border-top: 10px solid #fafbfb;
  border-right: 8px solid transparent;
}

.bubble input {
  flex: 1;
  font-family: inherit;
  font-size: 17px;
  padding: 0;
  border: none;
  outline: none;
  background: none;
}

.bubble input::placeholder {
  color: #858a8e;
  opacity: 1;
}

.visuals {
  display: grid;
  grid-template-columns: repeat(7, 94px);
  grid-auto-rows: 81px;
  margin-top: 29px;
}

.visuals button {
  display: flex;
  align-items: center;
  justify-content: center;
}

.visual {
  width: 64px;
  height: 64px;
  fill: #8698a9;
  overflow: visible;
}

.visual .dk {
  fill: #7b8a98;
}

.visual .ln {
  fill: none;
  stroke: #7b8a98;
}

.visual .gap {
  stroke: #d2d6d9;
}

.visual .gap2 {
  stroke: #d2d6d9;
  stroke-width: 2;
}

.visual .globe {
  fill: none;
  stroke: #8698a9;
  stroke-width: 2;
}

.visual .pin {
  fill: #7b8a98;
  stroke: #d2d6d9;
  stroke-width: 2;
}

.word {
  font-size: 14px;
  font-weight: 700;
  fill: #7b8a98;
}

/* drop zones */
.zones {
  width: 411px;
  flex: none;
  margin-bottom: 3px;
  background-color: #f2f2f2;
}

.zones-head {
  display: flex;
  align-items: center;
  gap: 12px;
  height: 31px;
  padding: 0 9px 0 8px;
  border-bottom: 1px solid #d2d6d9;
}

.zones-head h2 {
  flex: 1;
  color: #111;
}

.zone-list {
  display: flex;
  flex-direction: column;
  gap: 3px;
  padding: 11px;
}

.zone-list li {
  position: relative;
  display: flex;
  align-items: center;
  gap: 10px;
  height: 28px;
  padding: 0 8px 0 5px;
  border: 1px solid #d2d6d9;
}

.fold::after {
  content: "";
  position: absolute;
  left: 0;
  bottom: 0;
  border-left: 5px solid #8797a6;
  border-top: 5px solid transparent;
}

.more {
  width: 11px;
  height: 15px;
  margin-left: auto;
  background: repeating-linear-gradient(#8797a6 0 3px, transparent 3px 6px) center / 3px 15px no-repeat;
}

.formatting {
  display: flex;
  flex-direction: column;
  align-items: center;
  gap: 7px;
  width: 33px;
  flex: none;
  margin-bottom: 3px;
  padding: 10px 2px 0 0;
  color: #b5bcc2;
  background-color: #f2f2f2;
  border-left: 3px solid #d2d6d9;
}

.formatting span {
  writing-mode: vertical-rl;
  font-weight: 600;
  color: #111;
}

/* bottom bar */
.status {
  display: flex;
  align-items: center;
  gap: 9px;
  height: 37px;
  flex: none;
  padding-right: 9px;
  background-color: #d2d6d9;
  border-top: 3px solid #56b419;
}

.status-tools {
  display: flex;
  gap: 12px;
  width: 91px;
  padding-left: 11px;
}

.sheet {
  display: flex;
  align-items: center;
  gap: 6px;
  align-self: flex-start;
  height: 33px;
  margin-top: -3px;
  padding: 4px 5px 0 16px;
  font-size: 12px;
  background-color: #fff;
  border: 3px solid #56b419;
  border-top: none;
}

.add {
  margin-left: 5px;
}
```
